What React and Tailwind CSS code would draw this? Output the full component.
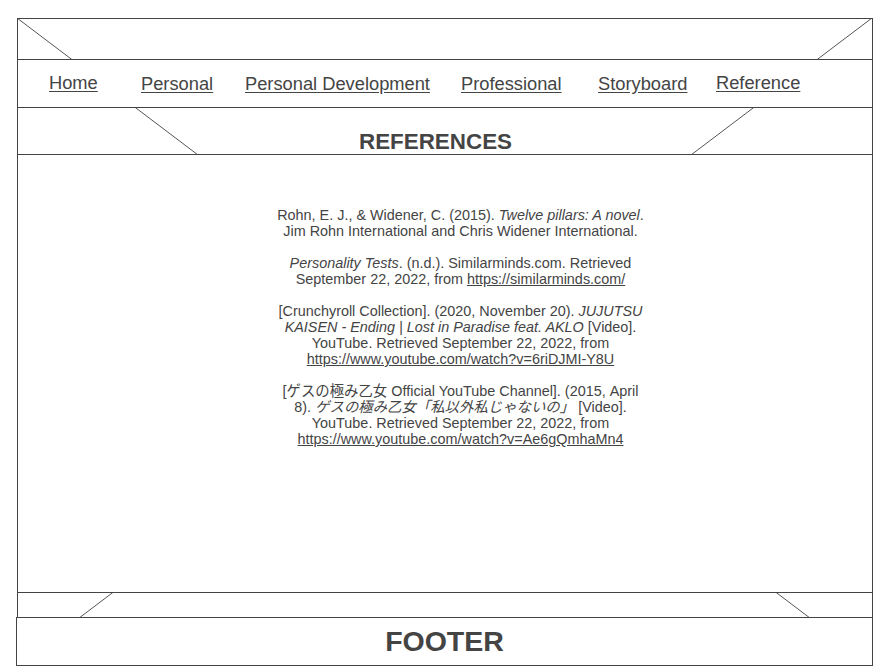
import React from "react";

const navLinks = [
  { label: "Home", width: "w-[92px]", nudge: "" },
  { label: "Personal", width: "w-[104px]", nudge: "pt-[2px]" },
  { label: "Personal Development", width: "w-[216px]", nudge: "pt-[2px]" },
  { label: "Professional", width: "w-[137px]", nudge: "pt-[2px]" },
  { label: "Storyboard", width: "w-[118px]", nudge: "pt-[2px]" },
  { label: "Reference", width: "w-[120px]", nudge: "" },
];

const App = () => {
  return (
    <div
      className="relative w-[889px] h-[666px] bg-white text-[#444] overflow-hidden"
      style={{ fontFamily: '"Liberation Sans", Arial, "Noto Sans CJK JP", sans-serif' }}
    >
      {/* image placeholder cross behind the page */}
      <svg
        className="absolute left-[17px] top-[18px] z-0"
        width="856"
        height="648"
        viewBox="0 0 856 648"
      >
        <line x1="0" y1="0" x2="855" y2="647" stroke="#555" strokeWidth="1" />
        <line x1="855" y1="0" x2="0" y2="647" stroke="#555" strokeWidth="1" />
      </svg>

      <div className="relative z-10 pt-[18px]">
        <div className="ml-[17px] w-[856px] border-x border-t border-[#444]">
          {/* header */}
          <div className="h-[40px]"></div>

          {/* nav */}
          <nav className="h-[49px] border-y border-[#444] bg-white flex items-center pl-[31px] pb-[2px] text-[18.3px]">
            {navLinks.map((link) => (
              <div key={link.label} className={`${link.width} ${link.nudge} shrink-0`}>
                <a href="#" className="underline underline-offset-2 whitespace-nowrap">
                  {link.label}
                </a>
              </div>
            ))}
          </nav>

          {/* title */}
          <div className="h-[46px] pt-[22px] pr-[19px] text-center">
            <h1 className="font-bold text-[22.4px] leading-[24px]">REFERENCES</h1>
          </div>

          {/* content */}
          <div className="h-[439px] border-y border-[#444] bg-white flex justify-center pl-[31px] pt-[52px]">
            <div className="w-[370px] text-center text-[14.4px] leading-[16px] flex flex-col gap-4">
              <p>
                Rohn, E. J., &amp; Widener, C. (2015). <i>Twelve pillars: A novel</i>. Jim Rohn
                International and Chris Widener International.
              </p>
              <p>
                <i>Personality Tests</i>. (n.d.). Similarminds.com. Retrieved September 22, 2022,
                from{" "}
                <a href="#" className="underline">
                  https://similarminds.com/
                </a>
              </p>
              <p>
                [Crunchyroll Collection]. (2020, November 20).{" "}
                <i>JUJUTSU KAISEN - Ending | Lost in Paradise feat. AKLO</i> [Video]. YouTube.
                Retrieved September 22, 2022, from{" "}
                <a href="#" className="underline">
                  https://www.youtube.com/watch?v=6riDJMI-Y8U
                </a>
              </p>
              <p>
                [ゲスの極み乙女 Official YouTube Channel]. (2015, April 8).{" "}
                <i>ゲスの極み乙女「私以外私じゃないの」</i> [Video]. YouTube. Retrieved September
                22, 2022, from{" "}
                <a href="#" className="underline">
                  https://www.youtube.com/watch?v=Ae6gQmhaMn4
                </a>
              </p>
            </div>
          </div>

          {/* gap above footer */}
          <div className="h-[24px]"></div>
        </div>

        {/* footer */}
        <footer className="ml-[16px] w-[857px] h-[49px] border border-[#444] bg-white flex items-center justify-center">
          <span className="font-bold text-[28.5px]">FOOTER</span>
        </footer>
      </div>
    </div>
  );
};

export default App;
